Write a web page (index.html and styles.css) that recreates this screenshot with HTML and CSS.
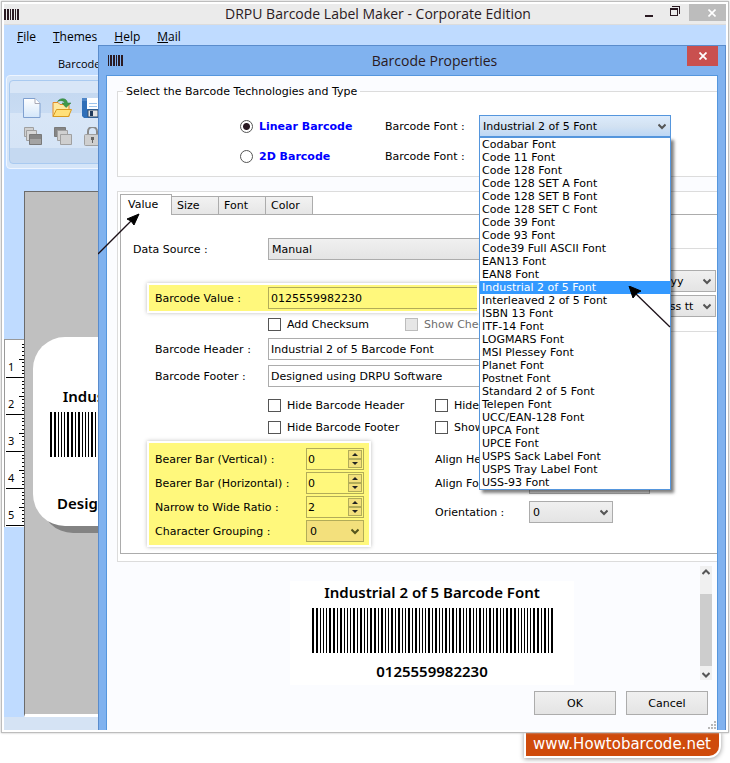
FILE: index.html
```html
<!DOCTYPE html>
<html lang="en">

<head>
    <meta charset="UTF-8">
    <meta name="viewport" content="width=device-width, initial-scale=1.0">
    <title>DRPU Barcode Label Maker - Corporate Edition</title>
    <link rel="stylesheet" href="styles.css">
</head>

<body>
    <div class="window">
        <header class="titlebar">
            <svg class="app-icon" width="16" height="11" viewBox="0 0 16 11" shape-rendering="crispEdges">
                <path d="M0 0h2v11h-2zM3 0h2v11h-2zM6 0h1v11h-1zM8 0h2v11h-2zM11 0h1v11h-1zM13 0h2v11h-2z" fill="#2a1a22" />
            </svg>
            <h1>DRPU Barcode Label Maker - Corporate Edition</h1>
            <div class="window-buttons">
                <button class="win-btn" aria-label="Minimize">
                    <svg width="8" height="12" viewBox="0 0 8 12"><path d="M0 8h8v2H0z" fill="#2a1a22" /></svg>
                </button>
                <button class="win-btn win-restore" aria-label="Restore">
                    <svg width="10" height="12" viewBox="0 0 10 12" shape-rendering="crispEdges">
                        <path d="M2 1.5H9.5V9" fill="none" stroke="#2a1a22" />
                        <path d="M.5 3v7.500h7V3" fill="none" stroke="#2a1a22" />
                        <path d="M0 3h8v2H0z" fill="#2a1a22" />
                    </svg>
                </button>
                <button class="win-btn win-close" aria-label="Close">
                    <svg width="8" height="8" viewBox="0 0 8 8"><path d="M.5.5l7 7M7.500.5l-7 7" stroke="#fff" stroke-width="1.600" /></svg>
                </button>
            </div>
        </header>

        <div class="desktop">
            <main class="editor">
                <nav class="menu">
                    <a href="#file"><u>F</u>ile</a>
                    <a href="#themes"><u>T</u>hemes</a>
                    <a href="#help"><u>H</u>elp</a>
                    <a href="#mail"><u>M</u>ail</a>
                </nav>
                <div class="ribbon-tab">Barcode</div>
                <div class="ribbon">
                    <div class="tools">
                        <button class="tool" aria-label="New">
                            <svg width="20" height="20" viewBox="0 0 20 20">
                                <defs>
                                    <linearGradient id="paper" x1="0" y1="0" x2="0" y2="1">
                                        <stop offset="0" stop-color="#fff" />
                                        <stop offset="1" stop-color="#d3e6fa" />
                                    </linearGradient>
                                </defs>
                                <path d="M1.500.5H13l5 5v14H1.500z" fill="url(#paper)" stroke="#7fa0d0" />
                                <path d="M13 .5v5h5" fill="#fff" stroke="#a9a9b5" />
                            </svg>
                        </button>
                        <button class="tool" aria-label="Open">
                            <svg width="20" height="20" viewBox="0 0 20 20">
                                <path d="M1 4.500h5l2 2h9v12H1z" fill="#fde9a0" stroke="#e08a25" />
                                <path d="M4.500 11.500h15l-3 7H1z" fill="#ffe07a" stroke="#d99a1e" />
                                <path d="M5.500 3.500C8-.5 15-.5 15.500 5H19l-5 4.500L10 5h2.500C12 2.500 8.500 2 5.500 3.500z" fill="#3f9a4a" stroke="#2d7a3a" stroke-width=".5" />
                            </svg>
                        </button>
                        <button class="tool" aria-label="Save">
                            <svg width="20" height="20" viewBox="0 0 20 20">
                                <path d="M0 0h20v20H2l-2-2z" fill="#2f6fb8" />
                                <path d="M0 0h20v3H0z" fill="#4e86c8" />
                                <path d="M5 0h12v11H5z" fill="#fff" />
                                <path d="M7 5.500h8M7 8.500h8" stroke="#9cc3ec" />
                                <path d="M6 12h10v7H6z" fill="#e4e4e4" stroke="#34506e" />
                                <path d="M8 13h3v5H8z" fill="#203a5c" />
                            </svg>
                        </button>
                        <button class="tool" aria-label="Bring to front">
                            <svg width="20" height="20" viewBox="0 0 20 20">
                                <path d="M2.500.5h9v9h-9z" fill="#d0d0d0" stroke="#a0a0a0" />
                                <path d="M4.500 3.500h10v10h-10z" fill="#d6d6d6" stroke="#a0a0a0" />
                                <path d="M7.500 7.500h12v10h-12z" fill="#868686" stroke="#7a7a7a" />
                                <path d="M8 12h11v5H8z" fill="#a4a4a4" />
                            </svg>
                        </button>
                        <button class="tool" aria-label="Send to back">
                            <svg width="20" height="20" viewBox="0 0 20 20">
                                <path d="M2.500.5h11v9h-11z" fill="#858585" stroke="#7a7a7a" />
                                <path d="M5.500 3.500h10v10h-10z" fill="#d0d0d0" stroke="#a0a0a0" />
                                <path d="M8.500 7.500h11v10h-11z" fill="#cfcfcf" stroke="#a0a0a0" />
                            </svg>
                        </button>
                        <button class="tool" aria-label="Lock">
                            <svg width="20" height="20" viewBox="0 0 20 20">
                                <path d="M6 8V4.500a4.500 4.500 0 0 1 9 0V8" fill="none" stroke="#8a8a8a" stroke-width="2" />
                                <rect x="2.500" y="7.500" width="16" height="11" rx="1" fill="#cfcfcf" stroke="#a0a0a0" />
                                <path d="M9 10h3v3h-1v3h-1v-3H9z" fill="#666" />
                            </svg>
                        </button>
                    </div>
                </div>
                <div class="workspace">
                    <div class="ruler-column">
                        <svg class="ruler" id="ruler" width="20" height="188" shape-rendering="crispEdges"></svg>
                    </div>
                    <div class="canvas">
                        <div class="label-card">
                            <div class="label-text">Industrial 2 of 5 Barcode Font</div>
                            <svg class="barcode" width="241" height="45" shape-rendering="crispEdges"></svg>
                            <div class="label-text label-footer">Designed using DRPU Software</div>
                        </div>
                    </div>
                </div>
                <div class="statusbar"></div>
            </main>

            <section class="dialog">
                <header class="dialog-title">
                    <svg class="app-icon" width="16" height="11" viewBox="0 0 16 11" shape-rendering="crispEdges">
                        <path d="M0 0h1v11h-1zM2 0h2v11h-2zM5 0h2v11h-2zM8 0h1v11h-1zM10 0h2v11h-2zM13 0h2v11h-2z" fill="#2a1a22" />
                    </svg>
                    <h2>Barcode Properties</h2>
                    <button class="dialog-close" aria-label="Close">
                        <svg width="8" height="8" viewBox="0 0 8 8"><path d="M.5.5l7 7M7.500.5l-7 7" stroke="#fff" stroke-width="1.800" /></svg>
                    </button>
                </header>

                <div class="dialog-body">
                    <fieldset class="type-group">
                        <legend>Select the Barcode Technologies and Type</legend>
                        <div class="type-row">
                            <label class="type-name"><input type="radio" name="type" checked> Linear Barcode</label>
                            <label for="linearFont">Barcode Font :</label>
                            <div class="font-picker">
                                <select id="linearFont" class="combo combo-open">
                                    <option>Industrial 2 of 5 Font</option>
                                </select>
                                <ul class="font-list" role="listbox">
                                    <li>Codabar Font</li>
                                    <li>Code 11 Font</li>
                                    <li>Code 128 Font</li>
                                    <li>Code 128 SET A Font</li>
                                    <li>Code 128 SET B Font</li>
                                    <li>Code 128 SET C Font</li>
                                    <li>Code 39 Font</li>
                                    <li>Code 93 Font</li>
                                    <li>Code39 Full ASCII Font</li>
                                    <li>EAN13 Font</li>
                                    <li>EAN8 Font</li>
                                    <li class="selected">Industrial 2 of 5 Font</li>
                                    <li>Interleaved 2 of 5 Font</li>
                                    <li>ISBN 13 Font</li>
                                    <li>ITF-14 Font</li>
                                    <li>LOGMARS Font</li>
                                    <li>MSI Plessey Font</li>
                                    <li>Planet Font</li>
                                    <li>Postnet Font</li>
                                    <li>Standard 2 of 5 Font</li>
                                    <li>Telepen Font</li>
                                    <li>UCC/EAN-128 Font</li>
                                    <li>UPCA Font</li>
                                    <li>UPCE Font</li>
                                    <li>USPS Sack Label Font</li>
                                    <li>USPS Tray Label Font</li>
                                    <li>USS-93 Font</li>
                                </ul>
                                <svg class="pointer list-pointer" width="43" height="42" viewBox="0 0 43 42">
                                    <path d="M6 6L42 41" stroke="#1c1018" stroke-width="1.300" />
                                    <path d="M1 0L13 5 9 7 5 12z" fill="#000" stroke="#000" />
                                </svg>
                            </div>
                        </div>
                        <div class="type-row">
                            <label class="type-name"><input type="radio" name="type"> 2D Barcode</label>
                            <label for="matrixFont">Barcode Font :</label>
                            <select id="matrixFont" class="combo">
                                <option>QR Code Font</option>
                            </select>
                        </div>
                    </fieldset>

                    <div class="settings">
                        <div class="tabs">
                            <button class="tab active">Value</button>
                            <button class="tab">Size</button>
                            <button class="tab">Font</button>
                            <button class="tab">Color</button>
                            <svg class="pointer tab-pointer" width="42" height="42" viewBox="0 0 42 42">
                                <path d="M0 41L35 6" stroke="#1c1018" stroke-width="1.300" />
                                <path d="M41 1L29 6 33 8 36 12z" fill="#000" stroke="#000" />
                            </svg>
                        </div>
                        <div class="tab-panel">
                            <div class="panel-top">
                                <div class="fields">
                                    <div class="field source">
                                        <label for="source">Data Source :</label>
                                        <select id="source" class="combo">
                                            <option>Manual</option>
                                        </select>
                                    </div>
                                    <div class="field highlight value-field">
                                        <label for="value">Barcode Value :</label>
                                        <input type="text" id="value" value="0125559982230">
                                    </div>
                                    <div class="checks checksum">
                                        <label><input type="checkbox">Add Checksum</label>
                                        <label class="disabled"><input type="checkbox" disabled>Show Checksum</label>
                                    </div>
                                    <div class="field">
                                        <label for="header">Barcode Header :</label>
                                        <input type="text" id="header" value="Industrial 2 of 5 Barcode Font">
                                    </div>
                                    <div class="field">
                                        <label for="footer">Barcode Footer :</label>
                                        <input type="text" id="footer" value="Designed using DRPU Software">
                                    </div>
                                    <div class="checks options">
                                        <label><input type="checkbox">Hide Barcode Header</label>
                                        <label><input type="checkbox">Hide Value</label>
                                        <label><input type="checkbox">Hide Barcode Footer</label>
                                        <label><input type="checkbox">Show Value</label>
                                    </div>
                                </div>
                                <fieldset class="date-group">
                                    <select class="combo" aria-label="Date format">
                                        <option>dd/MM/yyyy</option>
                                    </select>
                                    <select class="combo time-format" aria-label="Time format">
                                        <option>hh:mm:ss tt</option>
                                    </select>
                                </fieldset>
                            </div>
                            <div class="panel-bottom">
                                <div class="highlight bars">
                                    <label for="vertical">Bearer Bar (Vertical) :</label>
                                    <div class="spinner">
                                        <input type="number" id="vertical" value="0">
                                        <button class="up" aria-label="Increase"></button>
                                        <button class="down" aria-label="Decrease"></button>
                                    </div>
                                    <label for="horizontal">Bearer Bar (Horizontal) :</label>
                                    <div class="spinner">
                                        <input type="number" id="horizontal" value="0">
                                        <button class="up" aria-label="Increase"></button>
                                        <button class="down" aria-label="Decrease"></button>
                                    </div>
                                    <label for="ratio">Narrow to Wide Ratio :</label>
                                    <div class="spinner">
                                        <input type="number" id="ratio" value="2">
                                        <button class="up" aria-label="Increase"></button>
                                        <button class="down" aria-label="Decrease"></button>
                                    </div>
                                    <label for="grouping">Character Grouping :</label>
                                    <select id="grouping" class="combo">
                                        <option>0</option>
                                    </select>
                                </div>
                                <div class="align">
                                    <label for="alignHeader">Align Header :</label>
                                    <select id="alignHeader" class="combo">
                                        <option>Center</option>
                                    </select>
                                    <label for="alignFooter">Align Footer :</label>
                                    <select id="alignFooter" class="combo">
                                        <option>Center</option>
                                    </select>
                                    <label for="orientation" class="spaced">Orientation :</label>
                                    <select id="orientation" class="combo short spaced">
                                        <option>0</option>
                                    </select>
                                </div>
                            </div>
                        </div>
                    </div>

                    <div class="preview">
                        <div class="preview-card">
                            <div class="label-text">Industrial 2 of 5 Barcode Font</div>
                            <svg class="barcode" width="241" height="45" shape-rendering="crispEdges"></svg>
                            <div class="label-text">0125559982230</div>
                        </div>
                        <div class="scrollbar">
                            <svg width="8" height="6" viewBox="0 0 8 6"><path d="M.5 5L4 1.500 7.500 5" fill="none" stroke="#555" stroke-width="2" /></svg>
                            <div class="thumb"></div>
                            <svg width="8" height="6" viewBox="0 0 8 6"><path d="M.5 1L4 4.500 7.500 1" fill="none" stroke="#555" stroke-width="2" /></svg>
                        </div>
                    </div>

                    <div class="actions">
                        <button class="btn">OK</button>
                        <button class="btn">Cancel</button>
                    </div>
                    <svg class="grip" width="8" height="8" viewBox="0 0 8 8" shape-rendering="crispEdges">
                        <path d="M6 0h2v2H6zM3 3h2v2H3zM6 3h2v2H6zM0 6h2v2H0zM3 6h2v2H3zM6 6h2v2H6z" fill="#b8b8b8" />
                    </svg>
                </div>
            </section>
        </div>
    </div>

    <footer class="site-footer">
        <a href="#site">www.Howtobarcode.net</a>
    </footer>

    <script src="script.js"></script>
</body>

</html>
```

FILE: styles.css
```css
* {
    box-sizing: border-box;
}

body {
    font-family: "DejaVu Sans", Verdana, sans-serif;
    font-size: 11px;
    line-height: 13px;
    color: #000;
    margin: 0;
    padding: 1px 1px 0;
    min-height: 100vh;
    display: flex;
    flex-direction: column;
    background: #fff;
}

button,
input,
select {
    font: inherit;
    color: inherit;
    margin: 0;
    border-radius: 0;
}

button {
    padding: 0;
    border: none;
    background: none;
}

svg {
    display: block;
}

fieldset {
    margin: 0;
    padding: 0;
    min-width: 0;
    border: none;
}

/* main window */
.window {
    position: relative;
    z-index: 1;
    flex: 1;
    display: flex;
    flex-direction: column;
    padding: 2px;
    background: #fff;
    border: 1px solid #bdbdbd;
    box-shadow: 0 0 2px #bbb;
}

.titlebar {
    display: flex;
    align-items: center;
    height: 21px;
    background: #ebebeb;
    border-bottom: 1px solid #dcdcdc;
}

.titlebar h1,
.dialog-title h2 {
    flex: 1;
    margin: 0;
    font-family: "Open Sans", "Noto Sans", sans-serif;
    font-size: 14px;
    font-weight: normal;
    line-height: 20px;
    text-align: center;
    color: #2a1a22;
}

.titlebar h1 {
    padding-left: 100px;
}

.dialog-title h2 {
    padding-left: 58px;
}

.window-buttons {
    display: flex;
    align-self: flex-start;
}

.win-btn {
    width: 26px;
    height: 17px;
    display: flex;
    align-items: center;
    justify-content: center;
}

.win-restore {
    padding-bottom: 4px;
}

.win-close {
    width: 37px;
    margin-left: 1px;
    padding-left: 8px;
    background: #bcbcbc;
}

/* the dialog shares the grid cell with the editor and lies over it */
.desktop {
    flex: 1;
    display: grid;
    grid-template-columns: minmax(0, 1fr);
}

.editor,
.dialog {
    grid-area: 1 / 1;
    min-width: 0;
}

.editor {
    display: flex;
    flex-direction: column;
    overflow: hidden;
    background: #bfdbff;
    font-family: "Open Sans", "Noto Sans", sans-serif;
}

.menu {
    display: flex;
    gap: 17px;
    padding: 4px 13px;
    font-size: 12px;
    line-height: 16px;
}

.menu a {
    color: #000;
    text-decoration: none;
}

.ribbon-tab {
    padding: 7px 54px 3px;
    font-size: 11px;
    line-height: 16px;
}

.ribbon {
    margin-left: 2px;
    padding: 4px 2px;
    background: #d5e5f8;
    border: 1px solid #eef5ff;
    border-radius: 4px;
}

.tools {
    display: grid;
    grid-template-columns: repeat(3, 20px);
    gap: 9px 10px;
    padding: 17px 12px 16px;
    border: 1px solid #a9caf0;
    border-radius: 4px;
    background: linear-gradient(#d8e6f7 12px, #c5d9f1 12px, #c9dcf3 32px, #d8e6f7 32px, #d5e4f6 67px, #c5d9f1 67px);
}

.workspace {
    flex: 1;
    display: flex;
    margin-top: 22px;
}

.ruler-column {
    width: 20px;
    padding-top: 148px;
}

.ruler {
    background: #fff;
    font-family: "Noto Sans", sans-serif;
    font-size: 11px;
}

.canvas {
    flex: 1;
    padding: 145px 8px 0;
    background: #c0c0c0;
    border: solid #6b6b6b;
    border-width: 1px 0 0 1px;
    border-bottom: 3px solid #fff;
}

.label-card {
    width: 275px;
    padding: 50px 17px 14px;
    text-align: center;
    background: #fff;
    border-radius: 32px;
    box-shadow: 8px 7px 0 #838383;
}

.label-text {
    font-family: "Noto Sans", "Open Sans", sans-serif;
    font-size: 15px;
    font-weight: 600;
    line-height: 18px;
    white-space: nowrap;
}

.label-card .barcode {
    margin-top: 7px;
}

.label-footer {
    margin-top: 37px;
}

.statusbar {
    height: 13px;
    background: #d5e3f4;
}

/* properties dialog */
.dialog {
    z-index: 1;
    display: flex;
    flex-direction: column;
    margin: 20px 0 0 94px;
    padding: 0 7px;
    background: #80b2ef;
    border: 1px solid #5a8ccc;
    border-bottom: none;
}

.dialog-title {
    display: flex;
    align-items: center;
    height: 29px;
    padding-left: 2px;
}

.dialog-close {
    align-self: flex-start;
    width: 31px;
    height: 20px;
    display: flex;
    align-items: center;
    justify-content: center;
    background: #c9504f;
}

.dialog-body {
    flex: 1;
    position: relative;
    display: flex;
    flex-direction: column;
    padding: 9px 0 15px 10px;
    background: #fbfcff;
    border: 1px solid #5596dd;
    border-bottom: none;
}

.type-group {
    padding: 17px 0 9px 122px;
    border: 1px solid #dcdcdc;
    border-right: none;
    background: #fff;
}

.type-group legend {
    margin-left: -117px;
    padding: 0 3px;
}

.type-row {
    display: grid;
    grid-template-columns: 145px 94px 192px;
    align-items: center;
}

.type-row + .type-row {
    margin-top: 8px;
}

.type-name {
    display: flex;
    align-items: center;
    gap: 6px;
    font-weight: bold;
    color: #00f;
}

input[type="radio"] {
    appearance: none;
    width: 13px;
    height: 13px;
    background: #fff;
    border: 1px solid #555;
    border-radius: 50%;
}

input[type="radio"]:checked {
    background: radial-gradient(#2a1a22 3px, #fff 4px);
}

input[type="checkbox"] {
    appearance: none;
    width: 13px;
    height: 13px;
    background: #fff;
    border: 1px solid #555;
}

input[type="checkbox"]:disabled {
    background: #e6e6e6;
    border-color: #bcbcbc;
}

.combo {
    appearance: none;
    width: 100%;
    height: 22px;
    padding: 0 3px;
    border: 1px solid #acacac;
    background: url("data:image/svg+xml,%3Csvg xmlns='http://www.w3.org/2000/svg' width='8' height='7'%3E%3Cpath d='M.5 1.500L4 5l3.500-3.500' fill='none' stroke='%23555' stroke-width='2'/%3E%3C/svg%3E") no-repeat right 4px center, linear-gradient(#f0f0f0, #e4e4e4);
}

.combo-open {
    border-color: #5596dd;
    background: url("data:image/svg+xml,%3Csvg xmlns='http://www.w3.org/2000/svg' width='8' height='7'%3E%3Cpath d='M.5 1.500L4 5l3.500-3.500' fill='none' stroke='%23555' stroke-width='2'/%3E%3C/svg%3E") no-repeat right 4px center, linear-gradient(#dcebfc, #d3e2f2 50%, #bdd7f5);
}

.font-picker {
    position: relative;
}

.font-picker .combo {
    display: block;
}

.font-list {
    position: absolute;
    z-index: 2;
    top: 22px;
    left: 0;
    width: 100%;
    margin: 0;
    padding: 0;
    list-style: none;
    background: #fff;
    border: 1px solid #5596dd;
    box-shadow: 3px 3px 3px rgba(0, 0, 0, 0.5);
}

.font-list li {
    padding: 0 2px;
}

.font-list .selected {
    background: #3399ff;
    color: #fff;
}

.pointer {
    position: absolute;
    z-index: 3;
    fill: none;
}

.list-pointer {
    top: 171px;
    right: 0;
}

/* tabs */
.settings {
    margin-top: 14px;
    padding: 2px 0 7px 2px;
    background: #fff;
    border: 1px solid #dcdcdc;
    border-right: none;
}

.tabs {
    position: relative;
    display: flex;
    align-items: flex-end;
}

.tab {
    height: 18px;
    padding: 0 8px 0 5px;
    background: linear-gradient(#f2f2f2, #e6e6e6);
    border: 1px solid #acacac;
    border-left: none;
    border-bottom: none;
    min-width: 47px;
    text-align: left;
}

.tab.active {
    z-index: 1;
    height: 21px;
    min-width: 52px;
    margin-bottom: -1px;
    padding: 0 8px 2px 7px;
    background: #fff;
    border-left: 1px solid #acacac;
}

.tab-pointer {
    top: 19px;
    left: -22px;
}

.tab-panel {
    padding: 23px 0 8px 12px;
    border: 1px solid #acacac;
    border-right: none;
}

.panel-top {
    display: flex;
}

.fields {
    flex: 0 0 390px;
}

.field {
    display: flex;
    align-items: center;
    margin: 5px 0 0 22px;
}

.field label {
    flex: 0 0 113px;
}

.source {
    margin: 0;
}

.source label {
    flex-basis: 135px;
}

.field input {
    flex: 1;
    min-width: 0;
    height: 22px;
    padding: 0 2px;
    background: #fff;
    border: 1px solid #acacac;
}

.highlight {
    background: #fff87c;
    box-shadow: 0 0 0 2px #fff, 0 0 4px 2px #bbb;
}

.highlight input {
    border-color: #b2ac58;
    background-color: transparent;
}

.value-field {
    width: 328px;
    margin: 25px 0 0 16px;
    padding: 2px 0 2px 6px;
}

.value-field input {
    border-right: none;
    background: #fff87c;
    border-color: #b2ac58;
}

.checks {
    display: grid;
    margin-left: 135px;
    white-space: nowrap;
}

.checks label {
    display: flex;
    align-items: center;
    gap: 6px;
}

.checksum {
    grid-template-columns: 137px auto;
    margin-top: 7px;
    margin-bottom: 7px;
}

.disabled {
    color: #6d6d6d;
}

.options {
    grid-template-columns: 167px auto;
    row-gap: 9px;
    margin-top: 12px;
}

.date-group {
    flex: 1;
    align-self: flex-start;
    display: flex;
    flex-direction: column;
    align-items: flex-end;
    gap: 3px;
    margin-top: 10px;
    padding: 21px 1px 14px 8px;
    border: 1px solid #dcdcdc;
    border-right: none;
}

.date-group .combo {
    width: 103px;
}

.date-group .time-format {
    width: 93px;
}

.panel-bottom {
    display: flex;
    gap: 66px;
    margin: 9px 0 0 16px;
}

.bars {
    display: grid;
    grid-template-columns: 151px 58px;
    align-items: center;
    row-gap: 2px;
    padding: 5px 5px 3px 6px;
}

.bars .combo {
    border-color: #b2ac58;
    background: url("data:image/svg+xml,%3Csvg xmlns='http://www.w3.org/2000/svg' width='8' height='7'%3E%3Cpath d='M.5 1.500L4 5l3.500-3.500' fill='none' stroke='%2355551c' stroke-width='2'/%3E%3C/svg%3E") no-repeat right 4px center, #f3e07c;
}

.spinner {
    display: grid;
    grid-template: 9px 9px / 1fr 14px;
    padding: 1px;
    border: 1px solid #b2ac58;
    height: 22px;
}

.spinner input {
    grid-row: 1 / 3;
    min-width: 0;
    padding: 0;
    border: none;
    appearance: textfield;
    background: none;
}

.spinner input::-webkit-inner-spin-button {
    appearance: none;
}

.spinner button {
    display: flex;
    align-items: center;
    justify-content: center;
    background: #f3e07c;
    border: 1px solid #b2ac58;
}

.spinner button::before {
    content: "";
    border: 3px solid transparent;
    border-top: none;
    border-bottom-color: #222;
}

.spinner .down::before {
    border: 3px solid transparent;
    border-bottom: none;
    border-top-color: #222;
}

.align {
    display: grid;
    grid-template-columns: 94px 121px;
    grid-auto-rows: 22px;
    align-items: center;
    align-content: start;
    row-gap: 2px;
    padding-top: 5px;
}

.align .short {
    width: 84px;
}

.align .spaced {
    margin-top: 10px;
}

/* preview */
.preview {
    display: flex;
    align-items: flex-start;
    justify-content: space-between;
    padding: 4px 5px 0 173px;
}

.preview-card {
    width: 284px;
    margin-top: 15px;
    padding: 2px 0 5px;
    text-align: center;
    background: #fff;
}

.barcode {
    margin: 7px auto 9px;
}

.scrollbar {
    width: 12px;
    height: 114px;
    display: flex;
    flex-direction: column;
    align-items: center;
    justify-content: space-between;
    padding: 3px 0 2px;
    background: #f0f0f0;
}

.thumb {
    width: 12px;
    height: 72px;
    margin-top: 13px;
    background: #cdcdcd;
}

.actions {
    display: flex;
    justify-content: flex-end;
    gap: 10px;
    padding: 6px 9px 0 0;
}

.btn {
    width: 82px;
    height: 24px;
    border: 1px solid #acacac;
    background: linear-gradient(#f0f0f0, #e4e4e4);
}

.grip {
    position: absolute;
    right: 1px;
    bottom: 1px;
}

.site-footer {
    display: flex;
    justify-content: flex-end;
    padding: 0 10px 7px 0;
}

.site-footer a {
    padding: 0 8px 0 7px;
    font-size: 15px;
    line-height: 23px;
    color: #fff;
    text-decoration: none;
    background: #cf4b0b;
    border-bottom-right-radius: 10px;
    box-shadow: 0 0 0 2px #fff, 0 1px 5px 2px #999;
}
```

FILE: script.js
```js
// Industrial 2 of 5: five bars per digit, two of them wide
const digits = ['NNWWN', 'WNNNW', 'NWNNW', 'WWNNN', 'NNWNW', 'WNWNN', 'NWWNN', 'NNNWW', 'WNNWN', 'NWNWN'];

function barcodePath(value) {
    const bars = 'WWN' + [...value].map(d => digits[d]).join('') + 'WNW';
    let x = 0;
    let path = '';
    for (const bar of bars) {
        const width = bar === 'W' ? 2 : 1;
        path += `M${x} 0h${width}v45h-${width}z`;
        x += width + 2;
    }
    return path;
}

const value = document.getElementById('value').value;
document.querySelectorAll('.barcode').forEach(svg => {
    svg.innerHTML = `<path d="${barcodePath(value)}"/>`;
});

// ruler: a long line at each unit, ten ticks between
function drawRuler() {
    const unit = 37;
    let out = '<path d="M0 0h20v1H0zM0 0h1v188H0z" fill="#999"/>';
    for (let i = 0; i < 5; i++) {
        const top = 1 + i * unit;
        for (let t = 1; t < 10; t++) {
            const y = top + Math.round(t * unit / 10);
            const length = t === 5 ? 5 : 2;
            out += `<path d="M${20 - length} ${y}h${length}v1h-${length}z"/>`;
        }
        out += `<path d="M2 ${top + unit}h18v1H2z"/>`;
        out += `<text x="4" y="${top + 31}">${i + 1}</text>`;
    }
    document.getElementById('ruler').innerHTML = out;
}

drawRuler();
```
